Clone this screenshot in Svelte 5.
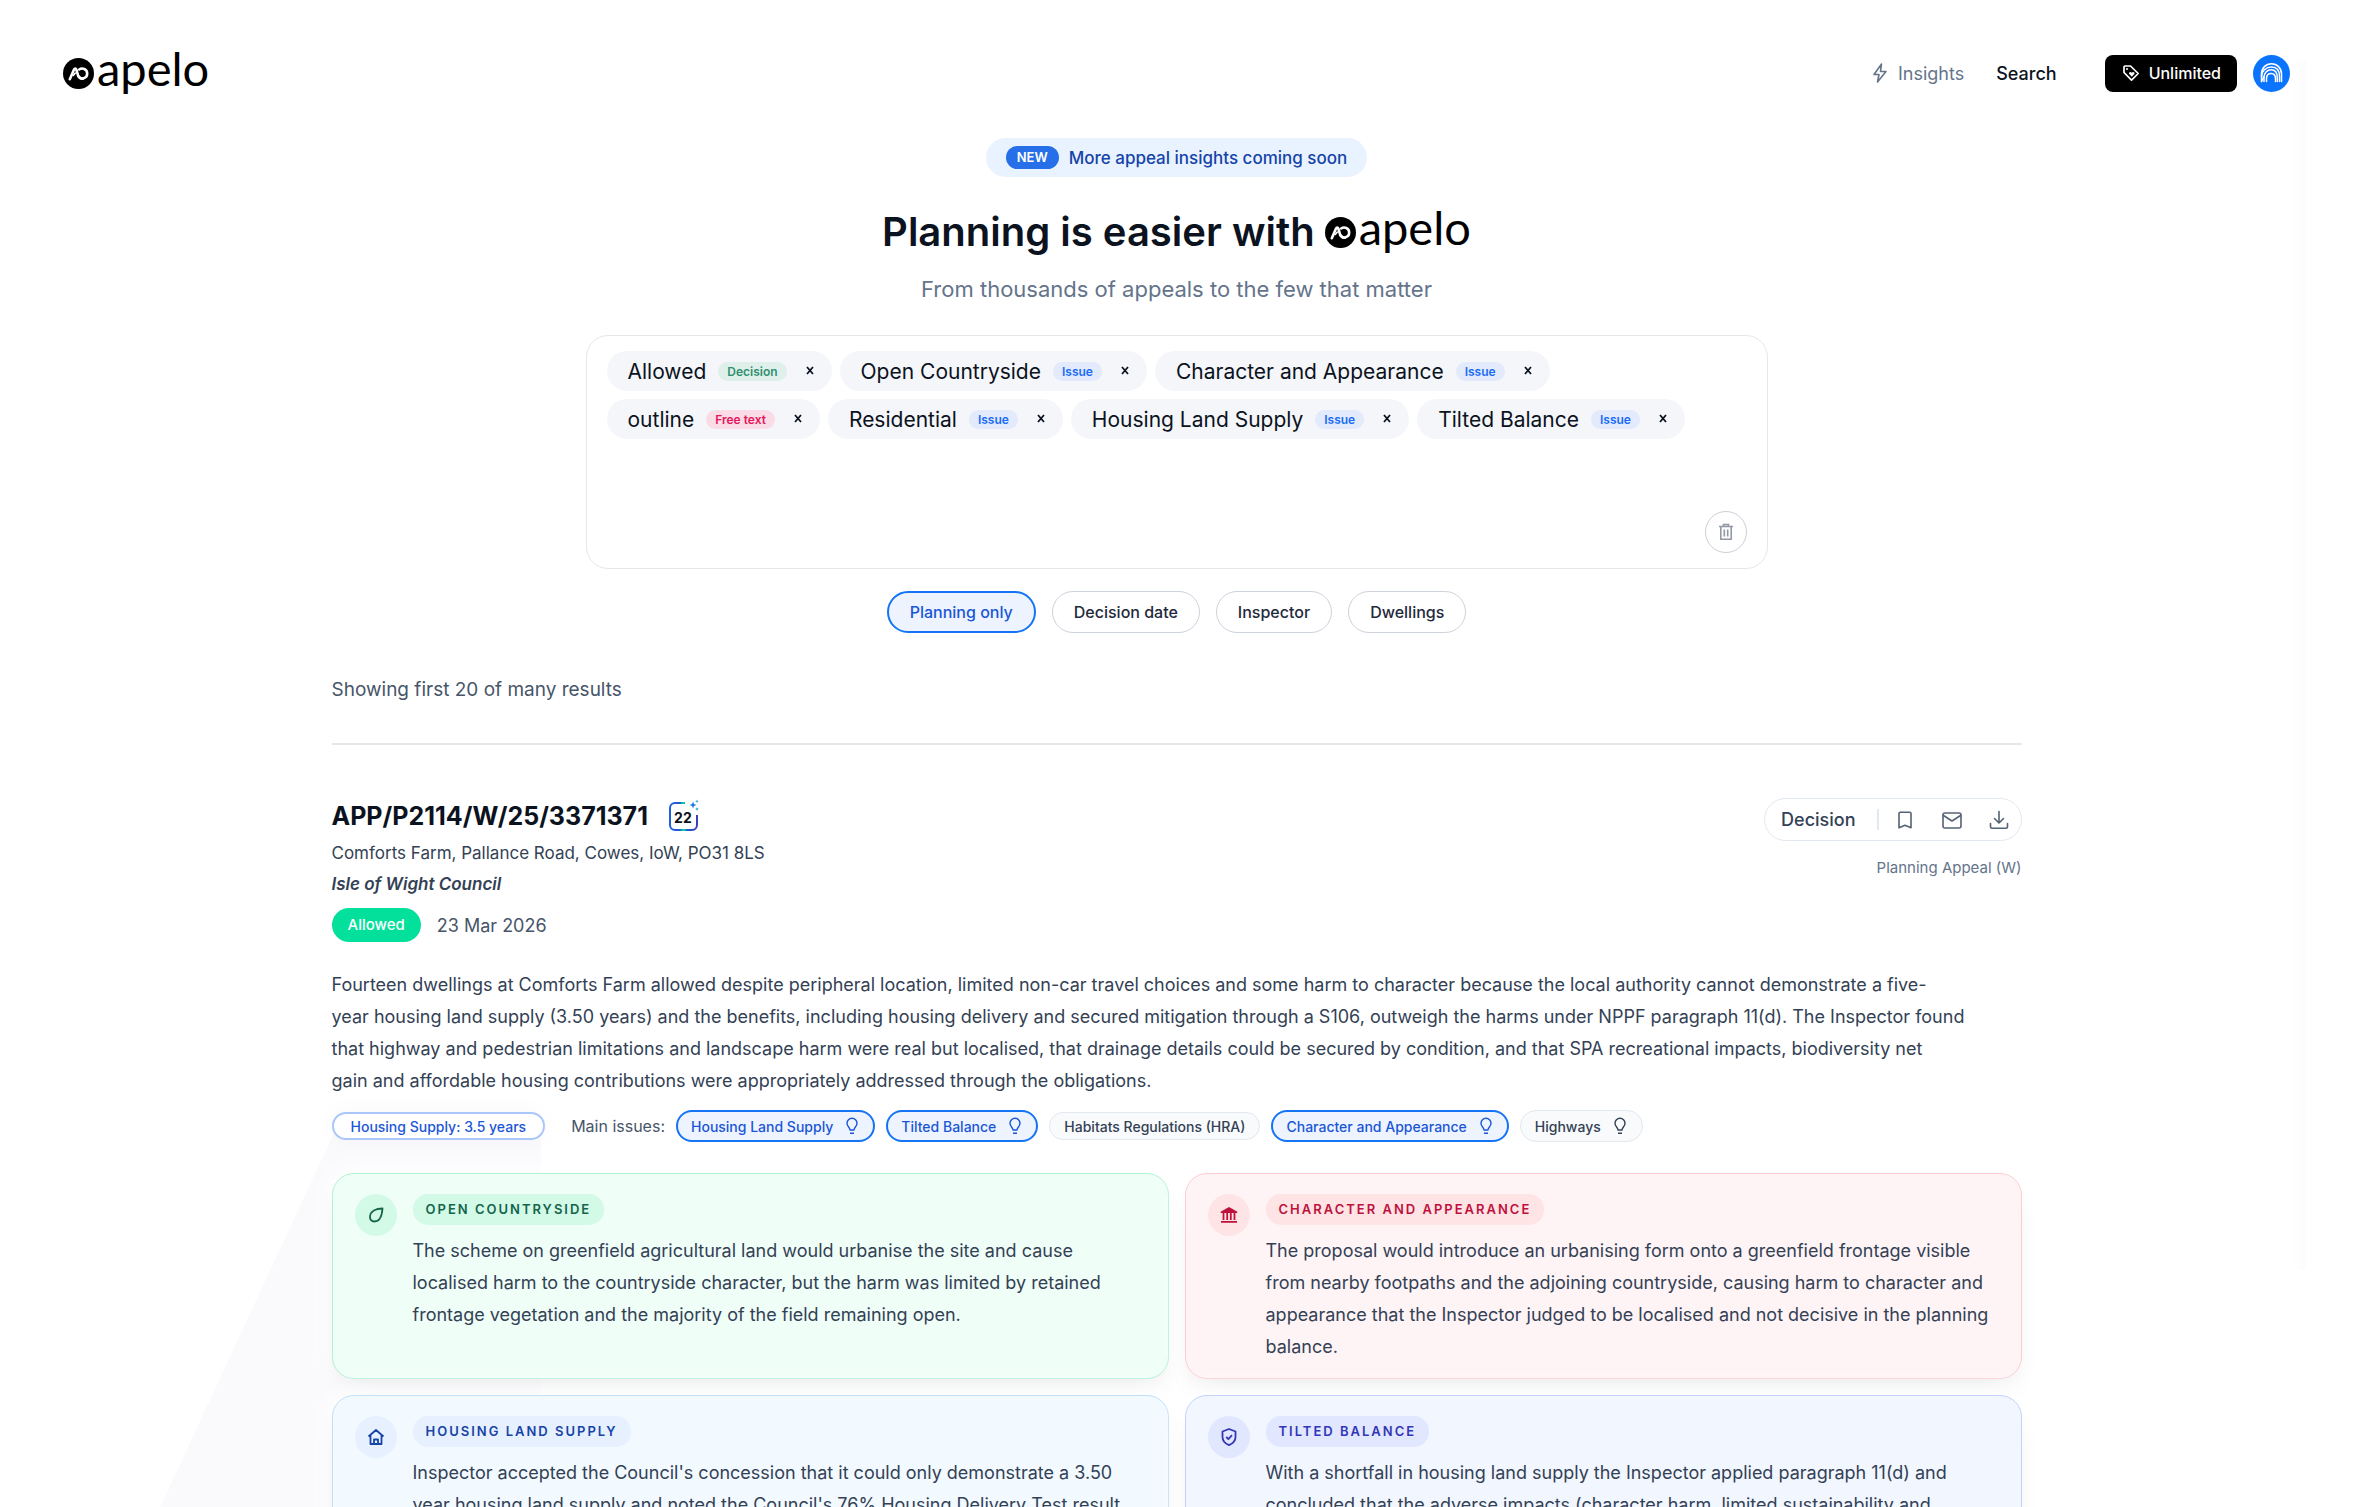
<script lang="ts">
  type Term = { label: string; kind: string };

  let terms = $state<Term[]>([
    { label: "Allowed", kind: "Decision" },
    { label: "Open Countryside", kind: "Issue" },
    { label: "Character and Appearance", kind: "Issue" },
    { label: "outline", kind: "Free text" },
    { label: "Residential", kind: "Issue" },
    { label: "Housing Land Supply", kind: "Issue" },
    { label: "Tilted Balance", kind: "Issue" },
  ]);

  const kindClass: Record<string, string> = {
    Decision: "decision",
    Issue: "issue",
    "Free text": "free",
  };

  const filters = ["Planning only", "Decision date", "Inspector", "Dwellings"];
  let activeFilter = $state("Planning only");

  const issues = [
    { name: "Housing Land Supply", matched: true, insight: true },
    { name: "Tilted Balance", matched: true, insight: true },
    { name: "Habitats Regulations (HRA)", matched: false, insight: false },
    { name: "Character and Appearance", matched: true, insight: true },
    { name: "Highways", matched: false, insight: true },
  ];

  const insights = [
    {
      title: "Open Countryside",
      tone: "green",
      text: "The scheme on greenfield agricultural land would urbanise the site and cause localised harm to the countryside character, but the harm was limited by retained frontage vegetation and the majority of the field remaining open.",
    },
    {
      title: "Character and Appearance",
      tone: "red",
      text: "The proposal would introduce an urbanising form onto a greenfield frontage visible from nearby footpaths and the adjoining countryside, causing harm to character and appearance that the Inspector judged to be localised and not decisive in the planning balance.",
    },
    {
      title: "Housing Land Supply",
      tone: "sky",
      text: "Inspector accepted the Council's concession that it could only demonstrate a 3.50 year housing land supply and noted the Council's 76% Housing Delivery Test result",
    },
    {
      title: "Tilted Balance",
      tone: "indigo",
      text: "With a shortfall in housing land supply the Inspector applied paragraph 11(d) and concluded that the adverse impacts (character harm, limited sustainability and",
    },
  ];

  function removeTerm(label: string) {
    terms = terms.filter((t) => t.label !== label);
  }
</script>

{#snippet logo()}
  <span class="logo">
    <svg width="31" height="31" viewBox="0 0 31 31" aria-hidden="true">
      <circle cx="15.5" cy="15.5" r="15.5" fill="#000" />
      <g fill="none" stroke="#fff" stroke-width="2.6" stroke-linecap="round" stroke-linejoin="round">
        <path d="M6.8 21.2 11 11.5c.6-1.3 1.8-1.3 2.3 0l1 3.3c.6 3.600 2.600 6 5.400 6" />
        <path d="M10.300 17.500l2-2.500" stroke-width="1.600" />
        <path d="M16.200 11.500c3-2 8-.6 8 4.300a4.800 4.800 0 0 1-8.800 2.500" />
      </g>
    </svg>
    <span>apelo</span>
  </span>
{/snippet}

{#snippet bulb()}
  <svg class="bulb" width="16" height="18" viewBox="0 0 16 18" aria-hidden="true">
    <path d="M6 13c0-2.300-3-3.400-3-6.800a5 5 0 0 1 10 0c0 3.400-3 4.500-3 6.800zM6 16.300h4" />
  </svg>
{/snippet}

<div class="page">
  <div class="backdrop left"></div>
  <div class="backdrop right"></div>

  <header>
    <a href="#home" class="home">{@render logo()}</a>
    <nav>
      <a href="#insights" class="muted">
        <svg width="18" height="22" viewBox="0 0 18 22" fill="none" stroke="currentColor" stroke-width="1.600" stroke-linejoin="round" aria-hidden="true">
          <path d="M10.500 2 3 12.500h5L6.500 20 15 9.500h-5.500z" />
        </svg>
        Insights
      </a>
      <a href="#search">Search</a>
    </nav>
    <button type="button" class="plan">
      <svg width="20" height="20" viewBox="0 0 20 20" fill="none" stroke="currentColor" stroke-width="1.700" stroke-linejoin="round" aria-hidden="true">
        <path d="M3 3.800v5.700l7.500 7.700 6.700-6.700L9.500 3H3.800z" />
        <circle cx="6" cy="6" r="1" fill="currentColor" stroke="none" />
        <path d="M10.800 13.800 8.200 11c-.8-1.500 1.300-2.800 2.600-1.300 1.300-1.500 3.400-.2 2.600 1.300z" fill="currentColor" stroke="none" />
      </svg>
      Unlimited
    </button>
    <button type="button" class="avatar" aria-label="Account">
      <svg width="37" height="37" viewBox="0 0 37 37" fill="none" stroke="#fff" stroke-width="1.500" stroke-linecap="round" aria-hidden="true">
        <path d="M8.500 26.500v-7.500C8.500 13 13 8.700 18.500 8.700S28.500 13 28.500 19v7.500" />
        <path d="M8.500 21.500c0-5.500 4.500-9.500 10-9.500s8 4 8 9.500v5M11 26.500v-4c0-4.500 3-7.800 7.300-7.800s6 4 6 8.300v3.500" />
        <path d="M8.500 26.500c1-1.500 1.500-3.500 2.500-5M13.500 26.500v-3c0-3 2-5 4.800-5s4.200 2.500 4.200 5.500v2.500" />
      </svg>
    </button>
  </header>

  <section class="hero">
    <a href="#news" class="news"><span class="new">NEW</span>More appeal insights coming soon</a>
    <h1>Planning is easier with {@render logo()}</h1>
    <p>From thousands of appeals to the few that matter</p>

    <div class="search">
      <div class="terms">
        {#each terms as term (term.label)}
          <div class="term">
            <span>{term.label}</span>
            <span class="kind {kindClass[term.kind]}">{term.kind}</span>
            <button type="button" aria-label="Remove {term.label}" onclick={() => removeTerm(term.label)}>
              <svg width="10" height="10" viewBox="0 0 10 10"><path d="M2 1l6 7M8 1l-6 7" /></svg>
            </button>
          </div>
        {/each}
      </div>
      <button type="button" class="clear" aria-label="Clear search" onclick={() => (terms = [])}>
        <svg width="18" height="20" viewBox="0 0 18 20" fill="none" stroke="currentColor" stroke-width="1.600" aria-hidden="true">
          <path d="M2 4.500h14M6.500 4V2.500h5V4M3.800 4.500V17.200h10.400V4.500M7.300 7.500v7M10.700 7.500v7" />
        </svg>
      </button>
    </div>

    <div class="filters">
      {#each filters as filter}
        <button type="button" class:active={filter === activeFilter} onclick={() => (activeFilter = filter)}>
          {filter}
        </button>
      {/each}
    </div>
  </section>

  <main>
    <p class="count">Showing first 20 of many results</p>

    <article>
      <div class="top">
        <div class="details">
          <div class="title">
            <h2>APP/P2114/W/25/3371371</h2>
            <span class="score">
              <svg width="32" height="34" viewBox="0 0 32 34" fill="none" stroke-width="2" aria-hidden="true">
                <defs>
                  <linearGradient id="score-edge" x1="0" y1="0" x2="1" y2="0">
                    <stop offset="0" stop-color="#1d5fe0" />
                    <stop offset="0.35" stop-color="#2458d8" />
                    <stop offset="0.5" stop-color="#00e09a" />
                    <stop offset="0.65" stop-color="#2458d8" />
                    <stop offset="1" stop-color="#3b3fb8" />
                  </linearGradient>
                </defs>
                <path d="M17 4H7a5 5 0 0 0-5 5v17a5 5 0 0 0 5 5h17a5 5 0 0 0 5-5V16" stroke="url(#score-edge)" />
                <path d="M25 2.500l1 2.500 2.500 1-2.500 1-1 2.500-1-2.500-2.500-1 2.500-1z" fill="#1f7ae0" />
                <path d="M29 .5l.5 1.300 1.300.5-1.300.5-.5 1.300-.5-1.300-1.300-.5 1.300-.5zM29 8l.6 1.500 1.400.5-1.400.6-.6 1.400-.6-1.400-1.400-.6 1.400-.5z" fill="#12a8c8" />
              </svg>
              <span>22</span>
            </span>
          </div>
          <p class="address">Comforts Farm, Pallance Road, Cowes, IoW, PO31 8LS</p>
          <p class="council">Isle of Wight Council</p>
          <div class="status">
            <span class="outcome">Allowed</span>
            <time datetime="2026-03-23">23 Mar 2026</time>
          </div>
        </div>

        <div class="side">
          <div class="actions">
            <a href="#decision">Decision</a>
            <span class="rule"></span>
            <button type="button" aria-label="Bookmark">
              <svg width="22" height="22" viewBox="0 0 22 22"><path d="M5 4.500c0-.8.500-1.300 1.300-1.300h9.400c.8 0 1.300.5 1.300 1.300v14.300l-6-2.600-6 2.600z" /></svg>
            </button>
            <button type="button" aria-label="Email">
              <svg width="22" height="22" viewBox="0 0 22 22"><rect x="2" y="4" width="18" height="15" rx="2" /><path d="M2.500 6.500 11 12l8.500-5.500" /></svg>
            </button>
            <button type="button" aria-label="Download">
              <svg width="22" height="22" viewBox="0 0 22 22"><path d="M11 2.500v11M6.500 9.500l4.500 4.500 4.500-4.500M2.500 14.500v3c0 1 .7 1.700 1.700 1.700h13.600c1 0 1.700-.7 1.700-1.700v-3" /></svg>
            </button>
          </div>
          <span class="type">Planning Appeal (W)</span>
        </div>
      </div>

      <p class="summary">
        Fourteen dwellings at Comforts Farm allowed despite peripheral location, limited non-car travel choices and some
        harm to character because the local authority cannot demonstrate a five-<br />year housing land supply (3.50 years)
        and the benefits, including housing delivery and secured mitigation through a S106, outweigh the harms under
        NPPF paragraph 11(d). The Inspector found<br />that highway and pedestrian limitations and landscape harm were
        real but localised, that drainage details could be secured by condition, and that SPA recreational impacts,
        biodiversity net<br />gain and affordable housing contributions were appropriately addressed through the obligations.
      </p>

      <div class="issues">
        <span class="pill supply">Housing Supply: 3.5 years</span>
        <span class="label">Main issues:</span>
        {#each issues as issue}
          {#if issue.insight}
            <button type="button" class="pill tall" class:matched={issue.matched}>{issue.name}{@render bulb()}</button>
          {:else}
            <span class="pill">{issue.name}</span>
          {/if}
        {/each}
      </div>

      <div class="cards">
        {#each insights as insight}
          <section class="card {insight.tone}">
            <span class="icon">
              <svg width="20" height="20" viewBox="0 0 20 20" aria-hidden="true">
                {#if insight.tone === "green"}
                  <path d="M16.500 3.500C10 3.500 4.500 6 4 11.500c-.2 3 1.500 5 4.500 5C14.500 16.500 16 10 16.500 3.500z" />
                {:else if insight.tone === "red"}
                  <path d="M2.500 7.200 10 3l7.500 4.200z" fill="currentColor" />
                  <path d="M4.500 8v7M8.200 8v7M11.800 8v7M15.500 8v7M2 16.800h16" />
                {:else if insight.tone === "sky"}
                  <path d="M2.500 9.500 10 3l7.500 6.500M4.500 8.500V17h11V8.500M8 17v-4.500h4V17" />
                {:else}
                  <path d="M10 2 16.500 4.500V10c0 4-2.500 6.500-6.500 8.200C6 16.500 3.500 14 3.500 10V4.500zM7.200 10l2.200 2.200 3.600-4" />
                {/if}
              </svg>
            </span>
            <div>
              <h3>{insight.title}</h3>
              <p>{insight.text}</p>
            </div>
          </section>
        {/each}
      </div>
    </article>
  </main>
</div>

<style>
  :global(body) {
    background: #fff;
  }

  .page {
    position: relative;
    min-height: 100vh;
    overflow: hidden;
    font-family: Inter, "Noto Sans", sans-serif;
    font-size: 17px;
    color: #334155;
  }

  .page * {
    box-sizing: border-box;
  }

  h1,
  h2,
  h3,
  p {
    margin: 0;
  }

  button {
    font: inherit;
    color: inherit;
    cursor: pointer;
  }

  a {
    color: inherit;
    text-decoration: none;
  }

  /* faint decorative shapes behind the content */
  .backdrop {
    position: absolute;
    z-index: -1;
    background: #fafafd;
  }

  .backdrop.left {
    top: 1120px;
    bottom: 0;
    left: 4%;
    width: 19%;
    clip-path: polygon(55% 0, 100% 0, 100% 100%, 0 100%);
  }

  .backdrop.right {
    top: 60px;
    right: 2%;
    width: 16px;
    height: 1210px;
    background: linear-gradient(to right, #fff, #fcfcfe);
  }

  .logo {
    display: inline-flex;
    align-items: center;
    gap: 3px;
    height: 48px;
    font-family: Lato, sans-serif;
    font-size: 47px;
    font-weight: 400;
    line-height: 32px;
    color: #000;
  }

  .logo span {
    padding-bottom: 10px;
  }

  header {
    display: flex;
    align-items: center;
    height: 92px;
    padding: 54px 63px 0;
  }

  .home {
    height: 48px;
    margin-right: auto;
  }

  nav {
    display: flex;
    gap: 32px;
    margin-right: 48px;
    font-size: 18px;
    font-weight: 500;
    color: #0b1220;
  }

  nav a {
    display: flex;
    align-items: center;
    gap: 9px;
  }

  nav .muted {
    font-weight: 400;
    color: #64748b;
  }

  .plan {
    display: flex;
    align-items: center;
    gap: 8px;
    height: 37px;
    padding: 0 16px;
    border: none;
    border-radius: 8px;
    background: #000;
    color: #fff;
    font-size: 16px;
    font-weight: 500;
  }

  .avatar {
    display: flex;
    margin-left: 16px;
    padding: 0;
    border: none;
    border-radius: 50%;
    background: #0b74ff;
  }

  .hero {
    display: flex;
    flex-direction: column;
    align-items: center;
    padding: 46px 32px 0;
  }

  .news {
    display: flex;
    align-items: center;
    gap: 10px;
    height: 39px;
    padding: 0 20px;
    border-radius: 20px;
    background: #e9f2ff;
    color: #1544a8;
    font-size: 17px;
    font-weight: 500;
  }

  .new {
    padding: 0 11px;
    border-radius: 12px;
    background: #276fe8;
    color: #fff;
    font-size: 13px;
    font-weight: 600;
    line-height: 23px;
  }

  h1 {
    display: flex;
    align-items: center;
    gap: 10px;
    margin-top: 31px;
    font-size: 40px;
    font-weight: 600;
    line-height: 48px;
    color: #0b1220;
  }

  .hero p {
    margin-top: 17px;
    font-size: 22px;
    line-height: 32px;
    color: #64748b;
  }

  .search {
    display: flex;
    flex-direction: column;
    justify-content: space-between;
    width: 100%;
    max-width: 1182px;
    min-height: 234px;
    margin-top: 30px;
    padding: 15px 20px;
    border: 1px solid #e5e7eb;
    border-radius: 22px;
    background: #fff;
  }

  .terms {
    display: flex;
    flex-wrap: wrap;
    gap: 8px;
  }

  .term {
    display: flex;
    align-items: center;
    height: 40px;
    padding: 0 11px 0 21px;
    border-radius: 20px;
    background: #f5f6fa;
    font-size: 21px;
    color: #0b1220;
  }

  .kind {
    margin: 0 12px;
    padding: 0 9px;
    border-radius: 10px;
    font-size: 12px;
    font-weight: 600;
    line-height: 19px;
  }

  .decision {
    background: #dff0ea;
    color: #2f8f70;
  }

  .issue {
    background: #e2eafc;
    color: #1a6cf5;
  }

  .free {
    background: #f9dce6;
    color: #e5175c;
  }

  .term button {
    display: flex;
    padding: 6px;
    border: none;
    background: none;
  }

  .term button path {
    stroke: #0b1220;
    stroke-width: 1.8;
  }

  .clear {
    display: flex;
    align-items: center;
    justify-content: center;
    align-self: flex-end;
    width: 42px;
    height: 42px;
    padding: 0;
    border: 1px solid #cbd0d8;
    border-radius: 50%;
    background: #fff;
    color: #9299a5;
  }

  .filters {
    display: flex;
    gap: 16px;
    margin-top: 22px;
  }

  .filters button {
    height: 42px;
    padding: 0 21px;
    border: 1px solid #ccd3db;
    border-radius: 21px;
    background: #fff;
    color: #1e293b;
    font-size: 16px;
    font-weight: 500;
  }

  .filters .active {
    border: 2px solid #1474f5;
    background: #eef4ff;
    color: #1a56d6;
  }

  main {
    max-width: 1690px;
    margin: 43px auto 0;
  }

  .count {
    padding-bottom: 39px;
    border-bottom: 2px solid #e5e7eb;
    font-size: 19px;
    line-height: 28px;
    color: #475569;
  }

  article {
    padding: 53px 0 48px;
  }

  .top {
    display: flex;
    justify-content: space-between;
  }

  .title {
    display: flex;
    align-items: center;
    gap: 20px;
    height: 36px;
  }

  h2 {
    font-size: 25px;
    font-weight: 700;
    color: #0b1220;
  }

  .score {
    display: grid;
    place-items: center;
    font-size: 14px;
    font-weight: 700;
    color: #0b1220;
  }

  .score > * {
    grid-area: 1 / 1;
  }

  .score span {
    padding: 2px 2px 0 0;
  }

  .address,
  .council {
    font-size: 17px;
    line-height: 31px;
  }

  .address {
    margin-top: 4px;
  }

  .council {
    font-style: italic;
    font-weight: 600;
  }

  .status {
    display: flex;
    align-items: center;
    gap: 16px;
    margin-top: 8px;
    font-size: 18px;
    color: #475569;
  }

  .outcome {
    padding: 0 16px;
    border-radius: 17px;
    background: #03e09b;
    color: #fff;
    font-size: 15px;
    font-weight: 500;
    line-height: 34px;
  }

  .side {
    display: flex;
    flex-direction: column;
    align-items: flex-end;
    gap: 16px;
  }

  .actions {
    display: flex;
    align-items: center;
    height: 43px;
    padding: 0 11px 0 16px;
    border: 1px solid #e2e8f0;
    border-radius: 22px;
    font-size: 18px;
    font-weight: 500;
  }

  .rule {
    width: 2px;
    height: 21px;
    margin: 0 15px 0 21px;
    background: #e2e8f0;
  }

  .actions button {
    display: flex;
    padding: 0;
    border: none;
    background: none;
  }

  .actions button + button {
    margin-left: 25px;
  }

  .actions svg {
    fill: none;
    stroke: #556376;
    stroke-width: 1.6;
    stroke-linecap: round;
    stroke-linejoin: round;
  }

  .type {
    font-size: 15px;
    line-height: 22px;
    color: #64748b;
  }

  .summary {
    margin-top: 27px;
    font-size: 18px;
    line-height: 32px;
  }

  .issues {
    display: flex;
    flex-wrap: wrap;
    align-items: center;
    gap: 11px;
    margin-top: 13px;
    font-size: 16px;
  }

  .label {
    margin-left: 15px;
    color: #475569;
  }

  .pill {
    display: flex;
    align-items: center;
    gap: 11px;
    height: 28px;
    padding: 0 14px;
    border: 1px solid #e2e8f0;
    border-radius: 16px;
    background: #f9fafc;
    font-size: 14px;
    font-weight: 500;
  }

  .tall {
    height: 32px;
  }

  .matched {
    padding: 0 13px;
    border: 2px solid #1474f5;
    background: #eef4ff;
    color: #1a56d6;
  }

  .supply {
    padding: 0 17px;
    border: 2px solid #a9c7fb;
    background: #fff;
    box-shadow: 0 0 24px rgba(30, 41, 90, 0.03);
    color: #1a56d6;
  }

  .bulb {
    fill: none;
    stroke: currentColor;
    stroke-width: 1.4;
    stroke-linejoin: round;
  }

  .cards {
    display: grid;
    grid-template-columns: 1fr 1fr;
    gap: 16px;
    margin-top: 31px;
  }

  .card {
    display: flex;
    gap: 16px;
    min-height: 206px;
    padding: 20px 22px 15px;
    border: 1px solid;
    border-radius: 22px;
    box-shadow: 0 16px 28px -12px rgba(15, 23, 42, 0.13), 0 0 24px 6px #fff;
  }

  .card p {
    margin-top: 10px;
    font-size: 18px;
    line-height: 32px;
  }

  .icon {
    display: grid;
    place-items: center;
    flex-shrink: 0;
    width: 42px;
    height: 42px;
    border-radius: 50%;
  }

  .icon svg {
    fill: none;
    stroke: currentColor;
    stroke-width: 1.8;
    stroke-linejoin: round;
  }

  h3 {
    width: fit-content;
    padding: 0 13px;
    border-radius: 15px;
    font-size: 13px;
    font-weight: 600;
    line-height: 31px;
    letter-spacing: 2px;
    text-transform: uppercase;
  }

  .green {
    border-color: #b0f2d4;
    background: #f0fef8;
  }

  .green .icon,
  .green h3 {
    background: #d3f9e7;
    color: #14654c;
  }

  .red {
    border-color: #fdcdd4;
    background: #fff4f5;
  }

  .red .icon,
  .red h3 {
    background: #ffe4e6;
    color: #be123c;
  }

  .sky {
    border-color: #bfe0fb;
    background: #f2f9ff;
  }

  .sky .icon,
  .sky h3 {
    background: #e6f0ff;
    color: #1744a5;
  }

  .indigo {
    border-color: #c4d2fb;
    background: #f2f6ff;
  }

  .indigo .icon,
  .indigo h3 {
    background: #e0e7ff;
    color: #3436b5;
  }
</style>
